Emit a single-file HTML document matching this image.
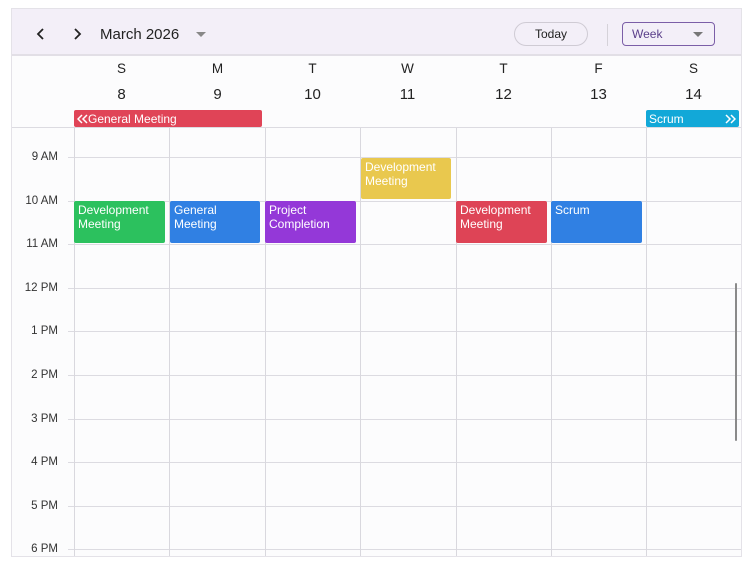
<!DOCTYPE html>
<html><head><meta charset="utf-8"><style>
*{margin:0;padding:0;box-sizing:border-box}
body{width:750px;height:564px;background:#fff;font-family:"Liberation Sans",sans-serif;position:relative;overflow:hidden}
.a{position:absolute}
.frame{left:11px;top:8px;width:731px;height:549px;border:1px solid #e4e2e8;background:#fcfcfd}
.hdr{left:12px;top:9px;width:729px;height:47px;background:#f3eff8;border-bottom:2px solid #e2dfe6}
.t{color:#222;font-size:14px}
.vl{width:1px;background:#d9d8de}
.hl{height:1px;background:#dcdbe1}
.tm{font-size:11.5px;color:#333;text-align:right;width:50px;left:8px}
.ev{color:#fff;font-size:12px;line-height:14px;padding:2px 4px;border-radius:2px}
.day{font-size:13.5px;color:#222;text-align:center;width:95px}
.num{font-size:15px;color:#222;text-align:center;width:95px}
</style></head><body>
<div class="a frame"></div>
<div class="a hdr"></div>
<svg class="a" style="left:35px;top:27px" width="12" height="14"><path d="M8 2 L3 7 L8 12" stroke="#222" stroke-width="1.8" fill="none"/></svg>
<svg class="a" style="left:71px;top:27px" width="12" height="14"><path d="M4 2 L9 7 L4 12" stroke="#222" stroke-width="1.8" fill="none"/></svg>
<div class="a t" style="left:100px;top:26px;font-size:15px;color:#222">March 2026</div>
<div class="a" style="left:196px;top:32px;width:0;height:0;border-left:5px solid transparent;border-right:5px solid transparent;border-top:5px solid #888"></div>
<div class="a" style="left:514px;top:22px;width:74px;height:24px;border:1px solid #cfcbd4;border-radius:12px;font-size:12px;color:#222;text-align:center;line-height:22px">Today</div>
<div class="a" style="left:607px;top:24px;width:1px;height:22px;background:#d5d2d9"></div>
<div class="a" style="left:622px;top:22px;width:93px;height:24px;border:1.5px solid #7b5ea7;border-radius:4px;font-size:12px;color:#5a3f8a;line-height:23px;padding-left:9px">Week</div>
<div class="a" style="left:693px;top:32px;width:0;height:0;border-left:5px solid transparent;border-right:5px solid transparent;border-top:5px solid #777"></div>

<div class="a day" style="left:74px;top:61px">S</div><div class="a num" style="left:74px;top:86px">8</div>
<div class="a day" style="left:170px;top:61px">M</div><div class="a num" style="left:170px;top:86px">9</div>
<div class="a day" style="left:265px;top:61px">T</div><div class="a num" style="left:265px;top:86px">10</div>
<div class="a day" style="left:360px;top:61px">W</div><div class="a num" style="left:360px;top:86px">11</div>
<div class="a day" style="left:456px;top:61px">T</div><div class="a num" style="left:456px;top:86px">12</div>
<div class="a day" style="left:551px;top:61px">F</div><div class="a num" style="left:551px;top:86px">13</div>
<div class="a day" style="left:646px;top:61px">S</div><div class="a num" style="left:646px;top:86px">14</div>

<div class="a ev" style="left:74px;top:110px;width:188px;height:17px;background:#e04457;line-height:16px;padding:1px 3px"><svg width="11" height="10" style="vertical-align:-1px"><path d="M5 1 L1 5 L5 9 M10 1 L6 5 L10 9" stroke="#fff" stroke-width="1.5" fill="none"/></svg>General Meeting</div>
<div class="a ev" style="left:646px;top:110px;width:93px;height:17px;background:#12a8d8;line-height:16px;padding:1px 3px">Scrum<svg width="11" height="10" style="float:right;margin-top:3px"><path d="M1 1 L5 5 L1 9 M6 1 L10 5 L6 9" stroke="#fff" stroke-width="1.5" fill="none"/></svg></div>

<div class="a hl" style="left:12px;top:127px;width:729px"></div>
<div class="a hl" style="left:68px;top:157px;width:673px"></div>
<div class="a hl" style="left:68px;top:201px;width:673px"></div>
<div class="a hl" style="left:68px;top:244px;width:673px"></div>
<div class="a hl" style="left:68px;top:288px;width:673px"></div>
<div class="a hl" style="left:68px;top:331px;width:673px"></div>
<div class="a hl" style="left:68px;top:375px;width:673px"></div>
<div class="a hl" style="left:68px;top:419px;width:673px"></div>
<div class="a hl" style="left:68px;top:462px;width:673px"></div>
<div class="a hl" style="left:68px;top:506px;width:673px"></div>
<div class="a hl" style="left:68px;top:549px;width:673px"></div>

<div class="a vl" style="left:74px;top:128px;height:428px"></div>
<div class="a vl" style="left:169px;top:128px;height:428px"></div>
<div class="a vl" style="left:265px;top:128px;height:428px"></div>
<div class="a vl" style="left:360px;top:128px;height:428px"></div>
<div class="a vl" style="left:456px;top:128px;height:428px"></div>
<div class="a vl" style="left:551px;top:128px;height:428px"></div>
<div class="a vl" style="left:646px;top:128px;height:428px"></div>

<div class="a tm" style="top:151px">9 AM</div>
<div class="a tm" style="top:195px">10 AM</div>
<div class="a tm" style="top:238px">11 AM</div>
<div class="a tm" style="top:282px">12 PM</div>
<div class="a tm" style="top:325px">1 PM</div>
<div class="a tm" style="top:369px">2 PM</div>
<div class="a tm" style="top:413px">3 PM</div>
<div class="a tm" style="top:456px">4 PM</div>
<div class="a tm" style="top:500px">5 PM</div>
<div class="a tm" style="top:543px">6 PM</div>

<div class="a ev" style="left:361px;top:158px;width:90px;height:41px;background:#e9c84e">Development<br>Meeting</div>
<div class="a ev" style="left:74px;top:201px;width:91px;height:42px;background:#2cc15e">Development<br>Meeting</div>
<div class="a ev" style="left:170px;top:201px;width:90px;height:42px;background:#3080e3">General<br>Meeting</div>
<div class="a ev" style="left:265px;top:201px;width:91px;height:42px;background:#9438d8">Project<br>Completion</div>
<div class="a ev" style="left:456px;top:201px;width:91px;height:42px;background:#de4456">Development<br>Meeting</div>
<div class="a ev" style="left:551px;top:201px;width:91px;height:42px;background:#3080e3">Scrum</div>

<div class="a" style="left:735px;top:283px;width:2px;height:158px;background:#8a8a8a;border-radius:1px"></div>
</body></html>
